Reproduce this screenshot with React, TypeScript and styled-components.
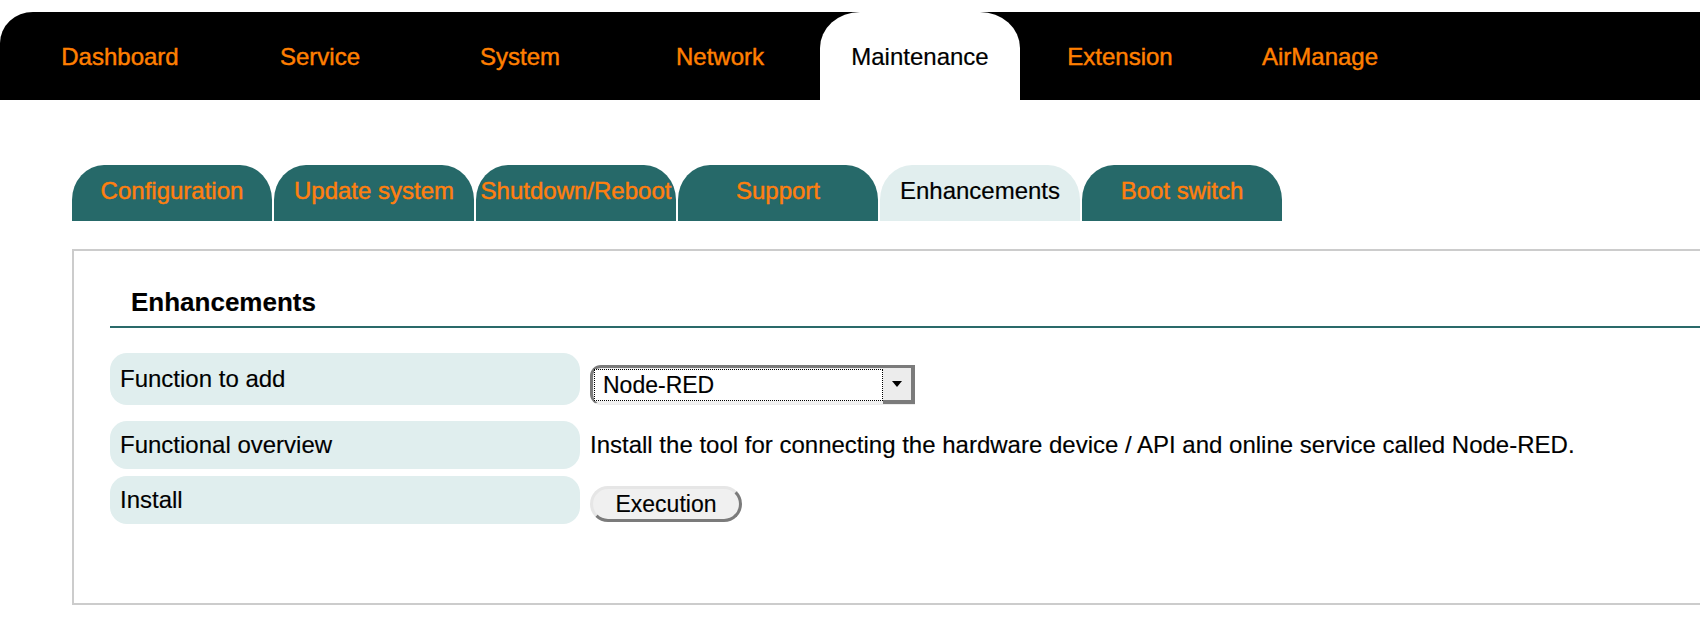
import React from "react";
import styled, { createGlobalStyle } from "styled-components";

const GlobalStyle = createGlobalStyle`
  html, body {
    margin: 0;
    padding: 0;
    background: #ffffff;
    overflow: hidden;
  }
  body {
    font-family: "Liberation Sans", Arial, Helvetica, sans-serif;
    color: #000;
    -webkit-text-stroke: 0.15px currentColor;
  }
`;

const Page = styled.div`
  padding-top: 12px;
  width: 1700px;
`;

const TopBar = styled.nav`
  display: flex;
  height: 88px;
  padding-left: 20px;
  background: #000;
  border-top-left-radius: 33px 31px;
`;

const NavItem = styled.div<{ $active?: boolean }>`
  width: 200px;
  height: 88px;
  box-sizing: border-box;
  padding-top: 2px;
  text-align: center;
  font-size: 24px;
  line-height: 86px;
  color: ${(p) => (p.$active ? "#000" : "#ff7f00")};
  -webkit-text-stroke: ${(p) => (p.$active ? "0.2px" : "0.45px")} currentColor;
  background: ${(p) => (p.$active ? "#fff" : "transparent")};
  border-radius: ${(p) => (p.$active ? "40px 40px 0 0 / 36px 36px 0 0" : "0")};
`;

const SubTabs = styled.div`
  display: flex;
  gap: 2px;
  margin-top: 65px;
  padding-left: 72px;
`;

const SubTab = styled.div<{ $active?: boolean }>`
  width: 200px;
  height: 56px;
  box-sizing: border-box;
  padding-top: 14px;
  text-align: center;
  white-space: nowrap;
  font-size: 24px;
  line-height: 24px;
  color: ${(p) => (p.$active ? "#000" : "#ff7f0f")};
  -webkit-text-stroke: ${(p) => (p.$active ? "0.2px" : "0.45px")} currentColor;
  background: ${(p) => (p.$active ? "#e1eeee" : "#266969")};
  border-radius: 32px 32px 0 0 / 35px 35px 0 0;
`;

const Panel = styled.section`
  margin-top: 28px;
  margin-left: 72px;
  width: 1700px;
  box-sizing: border-box;
  border: 2px solid #cccccc;
  border-right: none;
  padding: 36px 0 79px 36px;
`;

const Heading = styled.h2`
  margin: 0;
  padding: 0 0 9px 21px;
  font-size: 26px;
  line-height: 30px;
  font-weight: bold;
  border-bottom: 2px solid #2a6a6a;
`;

const Rows = styled.div`
  display: flex;
  flex-direction: column;
  margin-top: 25px;
`;

const Row = styled.div<{ $h: number; $gap: number }>`
  display: grid;
  grid-template-columns: 470px 1fr;
  column-gap: 10px;
  height: ${(p) => p.$h}px;
  margin-bottom: ${(p) => p.$gap}px;
`;

const Label = styled.div`
  display: flex;
  align-items: center;
  padding-left: 10px;
  background: #e0eeee;
  border-radius: 17px;
  font-size: 24px;
  line-height: 24px;
`;

const Value = styled.div`
  display: flex;
  align-items: center;
  font-size: 24px;
  line-height: 24px;
  white-space: nowrap;
`;

const SelectBox = styled.div`
  display: flex;
  width: 325px;
  height: 40px;
  margin-top: 12px;
  box-sizing: border-box;
  background: #f1f1f1;
  border-top: 3px solid #7b7b7b;
  border-left: 3px solid #7b7b7b;
  border-bottom: 1px solid #ececec;
  border-radius: 11px 0 0 11px;
`;

const SelectField = styled.div`
  flex: 1;
  display: flex;
  align-items: center;
  margin: 1px 0 3px 1px;
  padding-left: 8px;
  background: #fff;
  border: 1px dotted #000;
  font-size: 23px;
  line-height: 24px;
`;

const SelectArrow = styled.div`
  width: 32px;
  display: flex;
  align-items: center;
  justify-content: center;
  box-sizing: border-box;
  background: #ececec;
  border-right: 4px solid #7b7b7b;
  border-bottom: 4px solid #7b7b7b;

  &::after {
    content: "";
    width: 0;
    height: 0;
    border-left: 5px solid transparent;
    border-right: 5px solid transparent;
    border-top: 6px solid #000;
  }
`;

const ExecButton = styled.button`
  width: 152px;
  height: 36px;
  margin-top: 8px;
  padding: 0;
  box-sizing: border-box;
  background: #f0f0f0;
  border: 3px solid #e6e6e6;
  border-right-color: #7b7b7b;
  border-bottom-color: #7b7b7b;
  border-radius: 18px;
  font-family: "Liberation Sans", Arial, sans-serif;
  font-size: 23px;
  line-height: 24px;
  color: #000;
  -webkit-text-stroke: 0.15px currentColor;
`;

const navItems = [
  "Dashboard",
  "Service",
  "System",
  "Network",
  "Maintenance",
  "Extension",
  "AirManage",
];

const subTabs = [
  "Configuration",
  "Update system",
  "Shutdown/Reboot",
  "Support",
  "Enhancements",
  "Boot switch",
];

export default function App() {
  return (
    <Page>
      <GlobalStyle />
      <TopBar>
        {navItems.map((n) => (
          <NavItem key={n} $active={n === "Maintenance"}>
            {n}
          </NavItem>
        ))}
      </TopBar>
      <SubTabs>
        {subTabs.map((t) => (
          <SubTab key={t} $active={t === "Enhancements"}>
            {t}
          </SubTab>
        ))}
      </SubTabs>
      <Panel>
        <Heading>Enhancements</Heading>
        <Rows>
          <Row $h={50} $gap={18}>
            <Label>Function to add</Label>
            <Value>
              <SelectBox>
                <SelectField>Node-RED</SelectField>
                <SelectArrow />
              </SelectBox>
            </Value>
          </Row>
          <Row $h={48} $gap={7}>
            <Label>Functional overview</Label>
            <Value>
              Install the tool for connecting the hardware device / API and
              online service called Node-RED.
            </Value>
          </Row>
          <Row $h={48} $gap={0}>
            <Label>Install</Label>
            <Value>
              <ExecButton>Execution</ExecButton>
            </Value>
          </Row>
        </Rows>
      </Panel>
    </Page>
  );
}
